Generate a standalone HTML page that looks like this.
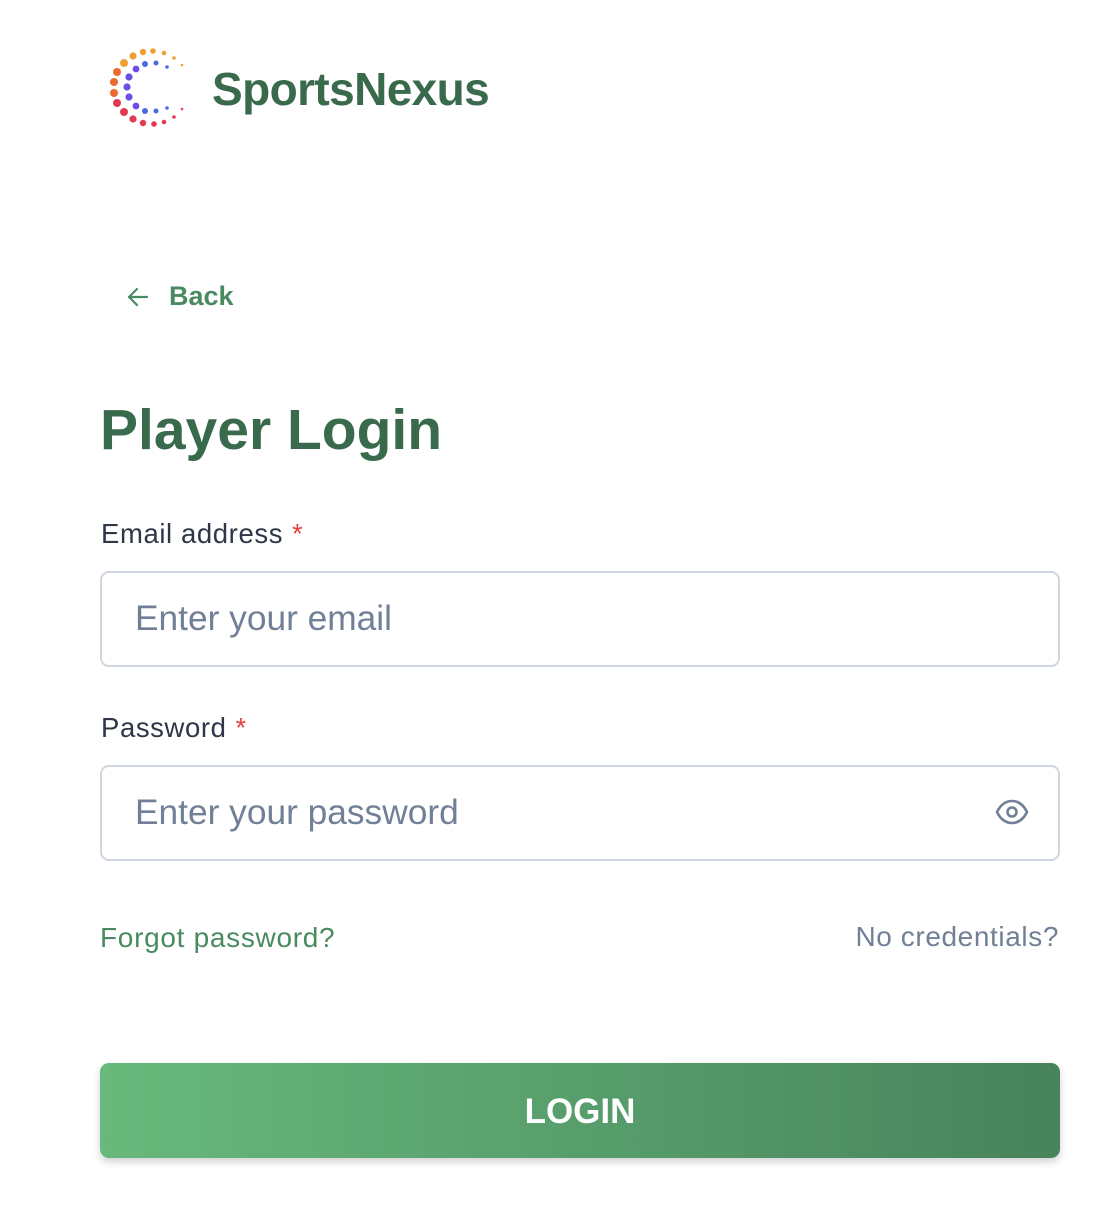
<!DOCTYPE html>
<html><head><meta charset="utf-8"><style>
body{margin:0;background:#fff;font-family:"Liberation Sans",sans-serif;width:1120px;height:1208px;position:relative;overflow:hidden}
.a{position:absolute;white-space:nowrap}
.inp{position:absolute;left:100px;width:956px;height:92px;border:2px solid #cfd6df;border-radius:9px;box-sizing:content-box}
.ph{position:absolute;left:33px;top:26px;font-size:35.3px;color:#718096}
.lbl{font-size:27.5px;color:#2d3748;letter-spacing:0.6px}
.lbl span{color:#e53e3e;margin-left:9px}
</style></head><body>
<svg class="a" style="left:0;top:0" width="200" height="140">
<g fill="#f0a033"><circle cx="124" cy="63" r="4"/><circle cx="133" cy="56" r="3.6"/><circle cx="143" cy="52" r="3.2"/><circle cx="153" cy="51" r="2.8"/><circle cx="164" cy="53" r="2.3"/><circle cx="174" cy="58" r="1.8"/><circle cx="182" cy="65" r="1.3"/></g>
<g fill="#ea6a30"><circle cx="117" cy="72" r="4"/><circle cx="114" cy="82" r="4"/><circle cx="114" cy="93" r="4"/></g>
<g fill="#e23a50"><circle cx="117" cy="103" r="4"/><circle cx="124" cy="112" r="4"/><circle cx="133" cy="119" r="3.6"/><circle cx="143" cy="123" r="3.2"/><circle cx="154" cy="124" r="2.8"/><circle cx="164" cy="122" r="2.3"/><circle cx="174" cy="117" r="1.8"/><circle cx="182" cy="109" r="1.3"/></g>
<g fill="#6a4ee6"><circle cx="136" cy="69" r="3.4"/><circle cx="129" cy="77" r="3.6"/><circle cx="127" cy="87" r="3.6"/><circle cx="129" cy="97" r="3.6"/><circle cx="136" cy="106" r="3.4"/></g>
<g fill="#4a6ae6"><circle cx="145" cy="64" r="3"/><circle cx="156" cy="63" r="2.5"/><circle cx="167" cy="67" r="1.8"/><circle cx="145" cy="111" r="3"/><circle cx="156" cy="111" r="2.5"/><circle cx="167" cy="108" r="1.8"/></g>
</svg>
<div class="a" style="left:212px;top:62px;font-size:46px;font-weight:bold;color:#3a6a4c;letter-spacing:-0.6px">SportsNexus</div>
<svg class="a" style="left:126px;top:286px" width="24" height="22" viewBox="0 0 24 22"><path d="M21 11H3M11 3L3 11l8 8" fill="none" stroke="#4a8a60" stroke-width="2.2" stroke-linecap="round" stroke-linejoin="round"/></svg>
<div class="a" style="left:169px;top:281px;font-size:27px;font-weight:bold;color:#4a8a60">Back</div>
<div class="a" style="left:100px;top:397px;font-size:57px;font-weight:bold;color:#3a6a4c">Player Login</div>
<div class="a lbl" style="left:101px;top:518px">Email address<span>*</span></div>
<div class="inp" style="top:571px"><div class="ph">Enter your email</div></div>
<div class="a lbl" style="left:101px;top:712px">Password<span>*</span></div>
<div class="inp" style="top:765px"><div class="ph">Enter your password</div>
<svg style="position:absolute;left:892px;top:30px" width="36" height="30" viewBox="0 0 36 30"><path d="M3 15C7 7 12 4 18 4s11 3 15 11c-4 8-9 11-15 11S7 23 3 15z" fill="none" stroke="#718096" stroke-width="2.6" stroke-linejoin="round"/><circle cx="18" cy="15" r="4.5" fill="none" stroke="#718096" stroke-width="2.6"/></svg></div>
<div class="a" style="left:100px;top:922px;font-size:28px;color:#4a8a60;letter-spacing:0.7px">Forgot password?</div>
<div class="a" style="right:61px;top:921px;font-size:28px;color:#718096;letter-spacing:0.6px">No credentials?</div>
<div class="a" style="left:100px;top:1063px;width:960px;height:95px;border-radius:9px;background:linear-gradient(90deg,#68b97c,#47835c);box-shadow:0 4px 8px rgba(0,0,0,0.18);color:#fff;font-size:35px;font-weight:bold;text-align:center;line-height:97px">LOGIN</div>
</body></html>
